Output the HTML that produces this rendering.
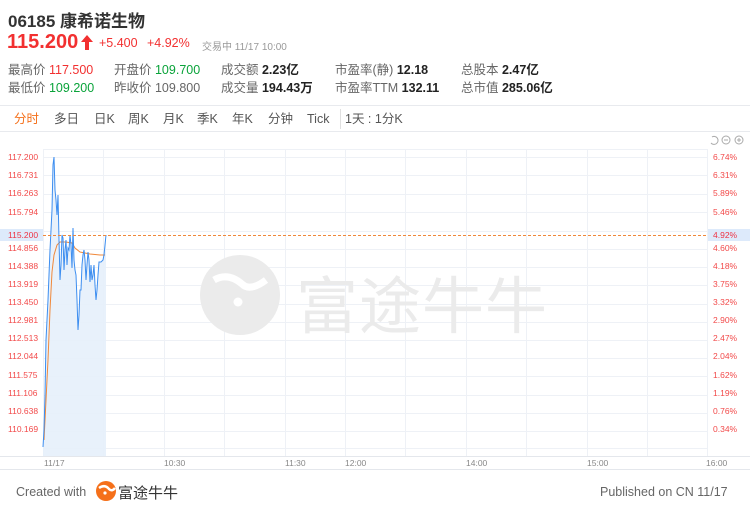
<!DOCTYPE html>
<html><head><meta charset="utf-8"><style>
*{margin:0;padding:0;box-sizing:border-box}
body{width:750px;height:513px;background:#fff;font-family:"Liberation Sans","Noto Sans CJK SC",sans-serif;position:relative;overflow:hidden;color:#333}
.a{position:absolute;white-space:nowrap}
.red{color:#f23030}.grn{color:#0aa33a}.g{color:#666}
.b{font-weight:bold;color:#222}
.st{font-size:12.5px;line-height:16px}
.tab{top:110px;font-size:12.5px;color:#555;line-height:18px}
.yl{font-size:8.5px;color:#f24a4a;left:8px}
.yr{font-size:8.5px;color:#f24a4a;left:713px}
.xt{font-size:8.5px;color:#888;top:458px}
</style></head><body>
<div class="a b" style="left:8px;top:7px;font-size:17px;color:#333">06185 康希诺生物</div>
<div class="a red" style="left:7px;top:31px;font-size:20px;font-weight:bold">115.200</div>
<svg class="a" style="left:80px;top:35px" width="14" height="15"><path d="M7 0L13 7H9V15H5V7H1Z" fill="#f23030"/></svg>
<div class="a red" style="left:99px;top:36px;font-size:12.5px">+5.400</div>
<div class="a red" style="left:147px;top:36px;font-size:12.5px">+4.92%</div>
<div class="a" style="left:202px;top:38px;font-size:10px;color:#999">交易中 11/17 10:00</div>

<div class="a st g" style="left:8px;top:62px">最高价 <span class="red">117.500</span></div>
<div class="a st g" style="left:8px;top:80px">最低价 <span class="grn">109.200</span></div>
<div class="a st g" style="left:114px;top:62px">开盘价 <span class="grn">109.700</span></div>
<div class="a st g" style="left:114px;top:80px">昨收价 <span class="g">109.800</span></div>
<div class="a st g" style="left:221px;top:62px">成交额 <span class="b">2.23亿</span></div>
<div class="a st g" style="left:221px;top:80px">成交量 <span class="b">194.43万</span></div>
<div class="a st g" style="left:335px;top:62px">市盈率(静) <span class="b">12.18</span></div>
<div class="a st g" style="left:335px;top:80px">市盈率TTM <span class="b">132.11</span></div>
<div class="a st g" style="left:461px;top:62px">总股本 <span class="b">2.47亿</span></div>
<div class="a st g" style="left:461px;top:80px">总市值 <span class="b">285.06亿</span></div>

<div class="a" style="left:0;top:105px;width:750px;height:1px;background:#e8eaee"></div>
<div class="a tab" style="left:14px;color:#f5701a">分时</div>
<div class="a tab" style="left:54px">多日</div>
<div class="a tab" style="left:94px">日K</div>
<div class="a tab" style="left:128px">周K</div>
<div class="a tab" style="left:163px">月K</div>
<div class="a tab" style="left:197px">季K</div>
<div class="a tab" style="left:232px">年K</div>
<div class="a tab" style="left:268px">分钟</div>
<div class="a tab" style="left:307px">Tick</div>
<div class="a" style="left:340px;top:109px;width:1px;height:20px;background:#e0e0e0"></div>
<div class="a tab" style="left:345px">1天 : 1分K</div>
<div class="a" style="left:0;top:131px;width:750px;height:1px;background:#e8eaee"></div>

<svg class="a" style="left:0;top:0" width="750" height="513">
<g stroke="#eef1f6" stroke-width="1">
<line x1="43" y1="149.5" x2="707" y2="149.5"/>
<line x1="43" y1="157.5" x2="707" y2="157.5"/><line x1="43" y1="175.5" x2="707" y2="175.5"/><line x1="43" y1="194.5" x2="707" y2="194.5"/><line x1="43" y1="212.5" x2="707" y2="212.5"/><line x1="43" y1="231.5" x2="707" y2="231.5"/><line x1="43" y1="249.5" x2="707" y2="249.5"/><line x1="43" y1="267.5" x2="707" y2="267.5"/><line x1="43" y1="285.5" x2="707" y2="285.5"/><line x1="43" y1="304.5" x2="707" y2="304.5"/><line x1="43" y1="322.5" x2="707" y2="322.5"/><line x1="43" y1="340.5" x2="707" y2="340.5"/><line x1="43" y1="358.5" x2="707" y2="358.5"/><line x1="43" y1="376.5" x2="707" y2="376.5"/><line x1="43" y1="395.5" x2="707" y2="395.5"/><line x1="43" y1="413.5" x2="707" y2="413.5"/><line x1="43" y1="431.5" x2="707" y2="431.5"/><line x1="43" y1="448.5" x2="707" y2="448.5"/>
<line x1="43.5" y1="149" x2="43.5" y2="456"/><line x1="103.5" y1="149" x2="103.5" y2="456"/><line x1="164.5" y1="149" x2="164.5" y2="456"/><line x1="224.5" y1="149" x2="224.5" y2="456"/><line x1="285.5" y1="149" x2="285.5" y2="456"/><line x1="345.5" y1="149" x2="345.5" y2="456"/><line x1="405.5" y1="149" x2="405.5" y2="456"/><line x1="466.5" y1="149" x2="466.5" y2="456"/><line x1="526.5" y1="149" x2="526.5" y2="456"/><line x1="587.5" y1="149" x2="587.5" y2="456"/><line x1="647.5" y1="149" x2="647.5" y2="456"/><line x1="707.5" y1="149" x2="707.5" y2="456"/>
</g>
<line x1="0" y1="456.5" x2="750" y2="456.5" stroke="#e4e7ec"/>
<line x1="0" y1="469.5" x2="750" y2="469.5" stroke="#e4e7ec"/>
<g fill="#ebebeb">
<circle cx="240" cy="295" r="40"/>
<text x="296" y="328" font-size="62" letter-spacing="1" font-family="Noto Sans CJK SC,sans-serif">富途牛牛</text>
</g>
<path d="M214 280q14-8 28 4q8 8 24-4" stroke="#fff" stroke-width="7" fill="none"/>
<circle cx="238" cy="302" r="4.5" fill="#fff"/>
<polygon fill="#e6effb" opacity="0.9" points="43,456 43,447 44,430 45,395 46,340 48,300 50,250 52,210 53,165 54,157 55,190 56,200 57,215 58,195 59,240 60,280 61,265 62,235 63,238 64,270 65,250 66,240 67,265 68,248 69,250 70,235 71,245 72,268 73,228 74,260 75,270 76,275 77,300 78,330 79,315 80,290 81,290 82,265 83,255 84,250 85,260 86,280 87,265 88,252 89,260 90,282 91,265 92,280 93,275 94,265 95,285 96,300 97,290 98,275 99,262 101,262 103,260 104,255 106,235 106,456"/>
<polyline fill="none" stroke="#f0883a" stroke-width="1" points="44,440 46,400 48,360 50,310 52,272 54,255 57,245 60,242 66,242 72,243 75,248 80,252 90,254 100,255 105,255"/>
<polyline fill="none" stroke="#3d8ef0" stroke-width="1" points="43,447 44,430 45,395 46,340 48,300 50,250 52,210 53,165 54,157 55,190 56,200 57,215 58,195 59,240 60,280 61,265 62,235 63,238 64,270 65,250 66,240 67,265 68,248 69,250 70,235 71,245 72,268 73,228 74,260 75,270 76,275 77,300 78,330 79,315 80,290 81,290 82,265 83,255 84,250 85,260 86,280 87,265 88,252 89,260 90,282 91,265 92,280 93,275 94,265 95,285 96,300 97,290 98,275 99,262 101,262 103,260 104,255 106,235"/>
<line x1="43" y1="235.5" x2="707" y2="235.5" stroke="#f0883a" stroke-dasharray="3,2"/>
<rect x="0" y="229" width="43" height="12" fill="#ddeafb"/>
<rect x="708" y="229" width="42" height="12" fill="#ddeafb"/>
<g fill="none" stroke="#aaa" stroke-width="1"><path d="M712 137a4 4 0 1 1 -1 6"/><circle cx="726" cy="140" r="4"/><line x1="724" y1="140" x2="728" y2="140"/><circle cx="739" cy="140" r="4"/><line x1="737" y1="140" x2="741" y2="140"/><line x1="739" y1="138" x2="739" y2="142"/></g>
</svg>

<div class="a yl" style="top:152px">117.200</div><div class="a yl" style="top:170px">116.731</div><div class="a yl" style="top:188px">116.263</div><div class="a yl" style="top:207px">115.794</div><div class="a yl" style="top:230px;color:#e34">115.200</div><div class="a yl" style="top:243px">114.856</div><div class="a yl" style="top:261px">114.388</div><div class="a yl" style="top:279px">113.919</div><div class="a yl" style="top:297px">113.450</div><div class="a yl" style="top:315px">112.981</div><div class="a yl" style="top:333px">112.513</div><div class="a yl" style="top:351px">112.044</div><div class="a yl" style="top:370px">111.575</div><div class="a yl" style="top:388px">111.106</div><div class="a yl" style="top:406px">110.638</div><div class="a yl" style="top:424px">110.169</div>
<div class="a yr" style="top:152px">6.74%</div><div class="a yr" style="top:170px">6.31%</div><div class="a yr" style="top:188px">5.89%</div><div class="a yr" style="top:207px">5.46%</div><div class="a yr" style="top:230px;color:#e34">4.92%</div><div class="a yr" style="top:243px">4.60%</div><div class="a yr" style="top:261px">4.18%</div><div class="a yr" style="top:279px">3.75%</div><div class="a yr" style="top:297px">3.32%</div><div class="a yr" style="top:315px">2.90%</div><div class="a yr" style="top:333px">2.47%</div><div class="a yr" style="top:351px">2.04%</div><div class="a yr" style="top:370px">1.62%</div><div class="a yr" style="top:388px">1.19%</div><div class="a yr" style="top:406px">0.76%</div><div class="a yr" style="top:424px">0.34%</div>
<div class="a xt" style="left:44px">11/17</div><div class="a xt" style="left:164px">10:30</div><div class="a xt" style="left:285px">11:30</div><div class="a xt" style="left:345px">12:00</div><div class="a xt" style="left:466px">14:00</div><div class="a xt" style="left:587px">15:00</div><div class="a xt" style="left:706px">16:00</div>

<div class="a" style="left:16px;top:485px;font-size:12.5px;color:#666">Created with</div>
<svg class="a" style="left:95px;top:480px" width="22" height="22"><circle cx="11" cy="11" r="10" fill="#f5701a"/><path d="M4 8q6-4 10 1q3 3 6-1" stroke="#fff" stroke-width="2.5" fill="none"/><circle cx="10" cy="13" r="1.6" fill="#fff"/></svg>
<div class="a" style="left:118px;top:482px;font-size:15px;color:#333">富途牛牛</div>
<div class="a" style="left:600px;top:485px;font-size:12.5px;color:#666">Published on CN 11/17</div>
</body></html>
